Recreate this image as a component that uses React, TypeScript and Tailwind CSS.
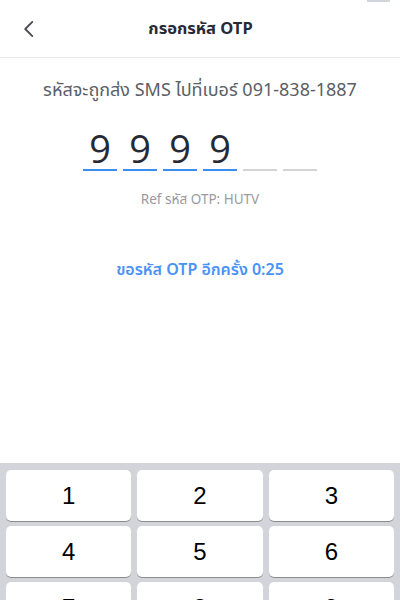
import React from 'react';

const digits = ['9', '9', '9', '9', '', ''];
const keys = ['1', '2', '3', '4', '5', '6', '7', '8', '9'];

const font = { fontFamily: '"Noto Sans", "Noto Sans Thai", "Liberation Sans", sans-serif' };

export default function App() {
    return (
        <div className="w-[400px] h-[600px] bg-white flex flex-col overflow-hidden" style={font}>
            {/* status bar fragment */}
            <div className="h-0 flex justify-end pr-[10px]">
                <div className="w-[23px] h-[2px] bg-gray-300" />
            </div>

            {/* Header */}
            <div className="h-[58px] flex items-center pl-[19px] pr-[18px] border-b border-[#ececec]">
                <svg width="20" height="20" viewBox="0 0 24 24" fill="none" stroke="#4a4a52" strokeWidth="2.2" strokeLinecap="round" strokeLinejoin="round">
                    <path d="M16 3.5 L7.5 12 L16 20.5" />
                </svg>
                <h1 className="flex-1 text-center text-[16.5px] font-bold text-[#262a36] pr-[20px]">กรอกรหัส OTP</h1>
            </div>

            {/* Body */}
            <div className="flex flex-col items-center">
                <p className="mt-[18px] text-[18px] text-[#5b5e66]">รหัสจะถูกส่ง SMS ไปที่เบอร์ 091-838-1887</p>

                <div className="mt-[26px] flex gap-[6px]">
                    {digits.map((d, i) => (
                        <div key={i} className="w-[34px] flex flex-col items-center">
                            <span className="h-[39px] leading-[39px] text-[38px] font-normal text-[#262a36]" style={{ fontFamily: '"Open Sans", "Noto Sans", sans-serif' }}>
                                {d}
                            </span>
                            <div className={`mt-[1px] w-full h-[2px] ${d ? 'bg-[#3d8cf0]' : 'bg-[#d4d4d4]'}`} />
                        </div>
                    ))}
                </div>

                <p className="mt-[18px] text-[13.5px] text-[#9a9a9f]">Ref รหัส OTP: HUTV</p>

                <p className="mt-[48px] text-[16px] font-semibold text-[#4a93f5]">ขอรหัส OTP อีกครั้ง 0:25</p>
            </div>

            <div className="flex-1" />

            {/* Keypad */}
            <div className="h-[137px] bg-[#d2d4da] pt-[7px] px-[6px] grid grid-cols-3 gap-x-[6px] gap-y-[5px] content-start">
                {keys.map((k) => (
                    <div
                        key={k}
                        className="h-[51px] bg-white rounded-[5px] shadow-[0_1px_0_#8c8d91] flex items-center justify-center text-[24px] text-black"
                        style={{ fontFamily: '"Liberation Sans", sans-serif' }}
                    >
                        {k}
                    </div>
                ))}
            </div>
        </div>
    );
}
